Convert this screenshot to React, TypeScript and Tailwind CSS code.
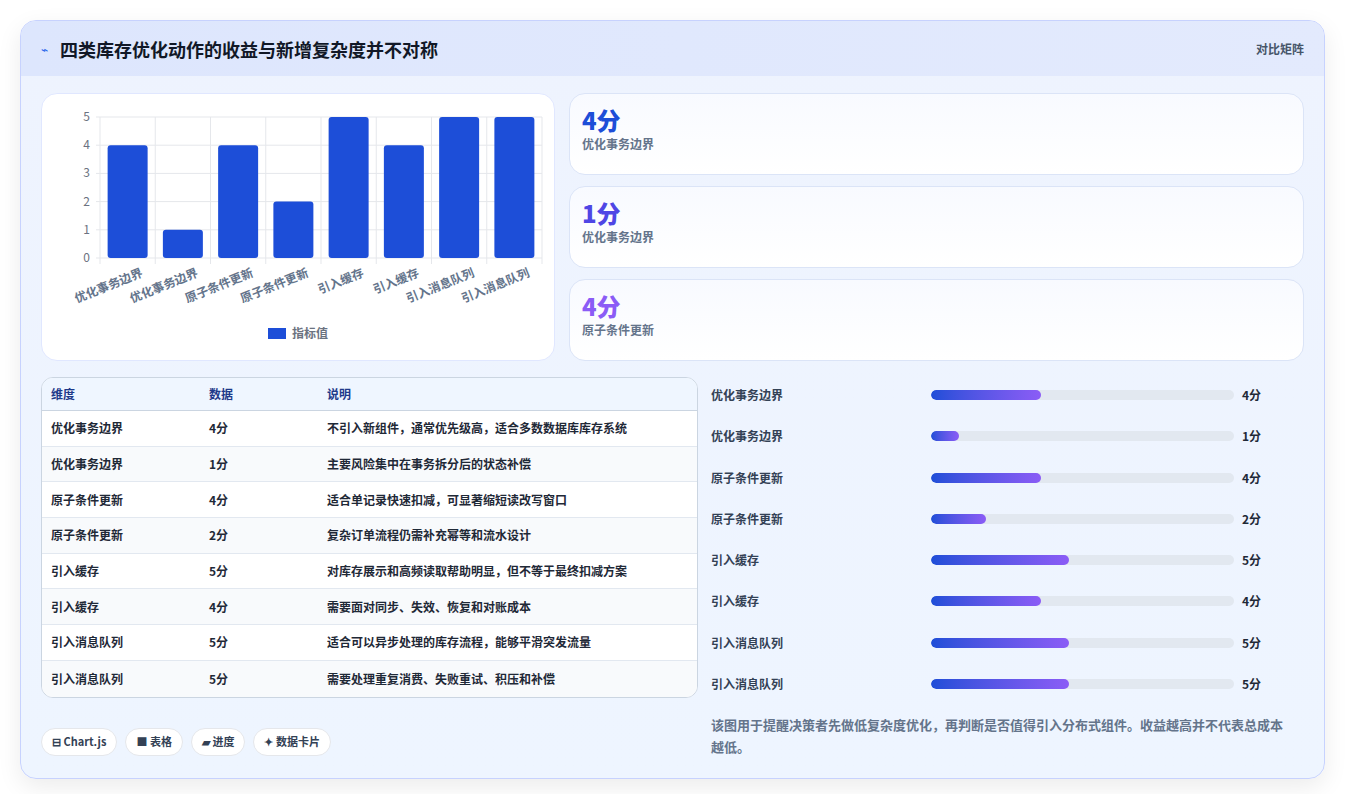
import React from 'react'

const rows = [
  { name: '优化事务边界', v: 4, note: '不引入新组件，通常优先级高，适合多数数据库库存系统' },
  { name: '优化事务边界', v: 1, note: '主要风险集中在事务拆分后的状态补偿' },
  { name: '原子条件更新', v: 4, note: '适合单记录快速扣减，可显著缩短读改写窗口' },
  { name: '原子条件更新', v: 2, note: '复杂订单流程仍需补充幂等和流水设计' },
  { name: '引入缓存', v: 5, note: '对库存展示和高频读取帮助明显，但不等于最终扣减方案' },
  { name: '引入缓存', v: 4, note: '需要面对同步、失效、恢复和对账成本' },
  { name: '引入消息队列', v: 5, note: '适合可以异步处理的库存流程，能够平滑突发流量' },
  { name: '引入消息队列', v: 5, note: '需要处理重复消费、失败重试、积压和补偿' },
]

const font = { fontFamily: '"Noto Sans CJK SC", "Liberation Sans", sans-serif' }

function Chart() {
  // plot area in svg coords
  const x0 = 58, x1 = 500, yTop = 23, yBot = 164
  const step = (x1 - x0) / 8
  const yOf = (v: number) => yBot - (v / 5) * (yBot - yTop)
  return (
    <svg width="512" height="266" viewBox="0 0 512 266">
      {[0, 1, 2, 3, 4, 5].map((t) => (
        <g key={t}>
          <line x1={x0 - 4} x2={x1} y1={yOf(t)} y2={yOf(t)} stroke="#e5e7eb" />
          <text x={x0 - 10} y={yOf(t) + 4} textAnchor="end" fontSize="12" fill="#6b7280">{t}</text>
        </g>
      ))}
      {Array.from({ length: 9 }).map((_, i) => (
        <line key={i} x1={x0 + i * step} x2={x0 + i * step} y1={yTop} y2={yBot + 6} stroke="#e5e7eb" />
      ))}
      {rows.map((r, i) => {
        const cx = x0 + i * step + step / 2
        return (
          <g key={i}>
            <rect x={cx - 20} y={yOf(r.v)} width="40" height={yBot - yOf(r.v)} rx="3" fill="#1d4ed8" />
            <text
              x={cx + 16}
              y={yBot + 18}
              textAnchor="end"
              fontSize="12"
              fontWeight="700"
              fill="#64748b"
              transform={`rotate(-22 ${cx + 16} ${yBot + 18})`}
            >
              {r.name}
            </text>
          </g>
        )
      })}
      <rect x="226" y="234" width="18" height="11" fill="#1d4ed8" />
      <text x="250" y="244" fontSize="12" fontWeight="700" fill="#6b7280">指标值</text>
    </svg>
  )
}

const cards = [
  { v: '4分', label: '优化事务边界', color: 'text-[#1d4ed8]' },
  { v: '1分', label: '优化事务边界', color: 'text-[#4f46e5]' },
  { v: '4分', label: '原子条件更新', color: 'text-[#8b5cf6]' },
]

export default function App() {
  return (
    <div className="min-h-screen bg-white p-5" style={font}>
      <div className="rounded-2xl border border-[#c7d2fe] bg-gradient-to-b from-[#eef3fe] to-[#eef5ff] shadow-[0_8px_24px_rgba(0,0,0,0.08)] overflow-hidden">
        <div className="h-[55px] flex items-center justify-between px-5 bg-gradient-to-r from-[#dde6fd] to-[#e3eafd]">
          <div className="flex items-center gap-3">
            <span className="text-[#2563eb] text-xs">⌁</span>
            <h1 className="text-lg font-bold text-[#111827]">四类库存优化动作的收益与新增复杂度并不对称</h1>
          </div>
          <span className="text-xs font-semibold text-[#475569]">对比矩阵</span>
        </div>
        <div className="p-5 pt-[17px]">
          <div className="flex gap-[14px]">
            <div className="w-[514px] h-[268px] shrink-0 rounded-2xl bg-white border border-[#e0e7ff]">
              <Chart />
            </div>
            <div className="flex-1 flex flex-col gap-[11px]">
              {cards.map((c, i) => (
                <div key={i} className="h-[82px] rounded-2xl border border-[#dbe4f7] bg-gradient-to-b from-[#f8faff] to-white px-3 pt-[10px]">
                  <div className={`text-2xl font-extrabold leading-8 ${c.color}`}>{c.v}</div>
                  <div className="text-xs font-semibold text-[#64748b]">{c.label}</div>
                </div>
              ))}
            </div>
          </div>
          <div className="flex gap-[13px] mt-4">
            <div className="w-[657px] shrink-0">
              <div className="rounded-xl border border-[#cbd5e1] overflow-hidden bg-white">
                <div className="flex h-[33px] items-center bg-[#eff6ff] border-b border-[#cbd5e1] text-xs font-bold text-[#1e3a8a] px-[9px]">
                  <div className="w-[158px]">维度</div>
                  <div className="w-[118px]">数据</div>
                  <div>说明</div>
                </div>
                {rows.map((r, i) => (
                  <div key={i} className={`flex h-[35.7px] items-center px-[9px] text-xs font-semibold text-[#1f2937] ${i < 7 ? 'border-b border-[#e2e8f0]' : ''} ${i % 2 ? 'bg-[#f8fafc]' : 'bg-white'}`}>
                    <div className="w-[158px]">{r.name}</div>
                    <div className="w-[118px]">{r.v}分</div>
                    <div>{r.note}</div>
                  </div>
                ))}
              </div>
              <div className="flex gap-2 mt-[30px]">
                {['⊟ Chart.js', '■ 表格', '▰ 进度', '✦ 数据卡片'].map((t) => (
                  <span key={t} className="h-7 px-2.5 flex items-center rounded-full bg-white border border-[#e5e7eb] text-[11px] font-bold text-[#334155]">{t}</span>
                ))}
              </div>
            </div>
            <div className="flex-1">
              <div className="flex flex-col gap-[23.3px] pt-[9px]">
                {rows.map((r, i) => (
                  <div key={i} className="flex items-center h-[18px]">
                    <div className="w-[220px] text-xs font-bold text-[#334155]">{r.name}</div>
                    <div className="w-[303px] h-[10px] rounded-full bg-[#e2e8f0] overflow-hidden">
                      <div className="h-full rounded-full bg-gradient-to-r from-[#1d4ed8] to-[#8b5cf6]" style={{ width: `${r.v * 9.1}%` }} />
                    </div>
                    <div className="ml-2 text-xs font-bold text-[#1f2937]">{r.v}分</div>
                  </div>
                ))}
              </div>
              <p className="mt-[21px] text-[13px] leading-[22px] text-[#64748b] font-semibold pr-4">
                该图用于提醒决策者先做低复杂度优化，再判断是否值得引入分布式组件。收益越高并不代表总成本越低。
              </p>
            </div>
          </div>
        </div>
      </div>
    </div>
  )
}
